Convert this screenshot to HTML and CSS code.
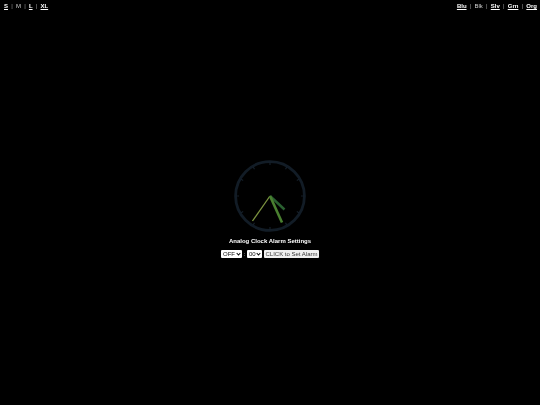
FILE: index.html
```html
<!DOCTYPE html>
<html lang="en">
<head>
<meta charset="utf-8">
<title>Analog Clock</title>
<link rel="stylesheet" href="styles.css">
</head>
<body>
<div class="page">
<header class="topbar">
  <nav class="links">
    <a href="#">S</a><span class="sep">|</span><span class="plain">M</span><span class="sep">|</span><a href="#">L</a><span class="sep">|</span><a href="#">XL</a>
  </nav>
  <nav class="links">
    <a href="#">Blu</a><span class="sep">|</span><span class="plain">Blk</span><span class="sep">|</span><a href="#">Slv</a><span class="sep">|</span><a href="#">Grn</a><span class="sep">|</span><a href="#">Org</a>
  </nav>
</header>
<main class="main">
  <svg class="clock" width="74" height="74" viewBox="-37 -37 74 74" aria-label="Analog clock">
    <circle class="rim" r="34.4"/>
    <g class="ticks">
      <path d="M0-34V-31M17-29.4 15.5-26.8M29.4-17 26.8-15.5M34 0H31M29.4 17 26.8 15.5M17 29.4 15.5 26.8M0 34V31M-17 29.4-15.5 26.8M-29.4 17-26.8 15.5M-34 0H-31M-29.4-17-26.8-15.5M-17-29.4-15.5-26.8"/>
    </g>
    <line class="hand-second" x1="0" y1="0" x2="-17.5" y2="25"/>
    <line class="hand-hour" x1="0" y1="0" x2="14.5" y2="13.5"/>
    <line class="hand-minute" x1="0" y1="0" x2="12" y2="26.5"/>
  </svg>
  <h1 class="title">Analog Clock Alarm Settings</h1>
  <form class="alarm">
    <select class="pick pick-state"><option>OFF</option></select>
    <span class="colon">:</span>
    <select class="pick pick-min"><option>00</option></select>
    <button class="set" type="button"><span class="set-label">CLICK to Set Alarm</span></button>
  </form>
</main>
</div>
</body>
</html>
```
FILE: styles.css
```css
html, body {
  height: 100%;
}
body {
  margin: 0;
  background: #000;
  overflow: hidden;
}
.page {
  height: 100%;
  color: #fff;
  font-family: "Liberation Sans", Arial, sans-serif;
  font-size: 6px;
  filter: blur(0.35px);
}
.topbar {
  display: flex;
  justify-content: space-between;
  padding: 2px 3px 0 4px;
  height: 11px;
  line-height: 8px;
}
.links {
  display: flex;
}
.links a {
  color: #fff;
  font-weight: bold;
  text-decoration: underline;
}
.plain {
  color: #d0d0d0;
}
.sep {
  color: #999;
  margin: 0 3.2px;
  font-weight: normal;
}
.main {
  display: flex;
  flex-direction: column;
  align-items: center;
  padding-top: 146px;
}
.clock {
  display: block;
}
.rim {
  fill: none;
  stroke: #121c26;
  stroke-width: 2.8;
}
.ticks path {
  fill: none;
  stroke: #141e28;
  stroke-width: 1.2;
}
.hand-hour {
  stroke: #2a6030;
  stroke-width: 2.4;
}
.hand-minute {
  stroke: #4a8030;
  stroke-width: 2.6;
}
.hand-second {
  stroke: #7d9440;
  stroke-width: 1.3;
}
.title {
  margin: 4px 0 0;
  font-size: 6px;
  line-height: 9px;
  font-weight: bold;
  color: #fff;
}
.alarm {
  display: flex;
  align-items: center;
  margin-top: 4px;
  height: 8px;
}
.pick {
  appearance: none;
  height: 8px;
  font-family: inherit;
  font-size: 6px;
  line-height: 8px;
  padding: 0 0 0 2px;
  border: 0;
  border-radius: 1px;
  color: #111;
  background: #fff url("data:image/svg+xml,%3Csvg xmlns='http://www.w3.org/2000/svg' width='5' height='4'%3E%3Cpath d='M.7 1 2.5 3 4.3 1' fill='none' stroke='%23111' stroke-width='1.1'/%3E%3C/svg%3E") no-repeat right 1px center;
}
.pick-state {
  width: 21px;
}
.pick-min {
  width: 15px;
}
.colon {
  width: 5px;
  text-align: center;
  color: #ddd;
}
.set {
  height: 8px;
  margin-left: 2px;
  width: 55px;
  padding: 0;
  font-family: inherit;
  font-size: 6px;
  line-height: 8px;
  border: 0;
  border-radius: 1px;
  background: #f0f0f0;
  color: #333;
}
.set-label {
  display: block;
  opacity: 0.98;
  will-change: opacity;
}
```
